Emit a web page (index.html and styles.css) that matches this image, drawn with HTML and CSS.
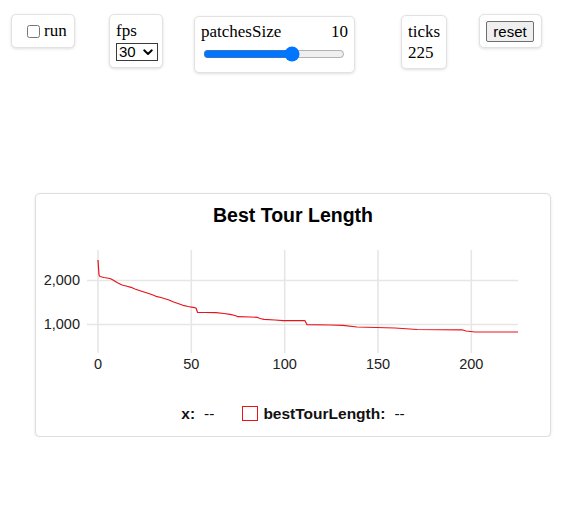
FILE: index.html
```html
<!DOCTYPE html>
<html>
<head>
<meta charset="utf-8">
<link rel="stylesheet" href="styles.css">
</head>
<body>
<div class="controls">
  <label class="box box-run"><input type="checkbox" class="check">run</label>
  <div class="box box-fps">
    <div class="line">fps</div>
    <span class="select-wrap">
      <select class="select"><option>30</option></select>
      <svg class="chev" width="10" height="7" viewBox="0 0 10 7"><path d="M1.2 1.3 L5 5 L8.8 1.3" fill="none" stroke="#000" stroke-width="1.9" stroke-linecap="round" stroke-linejoin="round"/></svg>
    </span>
  </div>
  <div class="box box-patches">
    <div class="row"><span>patchesSize</span><span>10</span></div>
    <input type="range" class="range" min="1" max="15" value="10">
  </div>
  <div class="box box-ticks">
    <div class="line">ticks</div>
    <div class="line">225</div>
  </div>
  <div class="box box-reset"><button class="btn">reset</button></div>
</div>

<div class="card">
  <div class="title">Best Tour Length</div>
  <svg class="plot" width="514" height="145" viewBox="0 0 514 145">
    <g class="grid">
      <line x1="51" y1="45.5" x2="482" y2="45.5"/>
      <line x1="51" y1="89.5" x2="482" y2="89.5"/>
      <line x1="62" y1="15" x2="62" y2="118"/>
      <line x1="155.3" y1="15" x2="155.3" y2="118"/>
      <line x1="248.7" y1="15" x2="248.7" y2="118"/>
      <line x1="342" y1="15" x2="342" y2="118"/>
      <line x1="435.3" y1="15" x2="435.3" y2="118"/>
    </g>
    <g class="ylab">
      <text x="44" y="46">2,000</text>
      <text x="44" y="90">1,000</text>
    </g>
    <g class="xlab">
      <text x="62" y="130">0</text>
      <text x="155.3" y="130">50</text>
      <text x="248.7" y="130">100</text>
      <text x="342" y="130">150</text>
      <text x="435.3" y="130">200</text>
    </g>
    <polyline class="series" points="62,25 63,40 64,41.5 68,42.5 74,43.5 77,45 81,47.5 86,50 90,51 95,52.3 99,54 104,55.7 108,57 112,58.3 117,60 121,61.7 125,62.5 129,63.7 133,65 137,66.7 142,68.5 147,70.3 152,71.5 157,72.3 160,73 161.5,77.3 169,77.5 180,77.7 188,78.5 194,79.3 199,80.5 202,81.7 214,82 221,82.3 224,83.5 228,84.3 239,85 247,85.7 269,85.7 271,89.7 294,90 307,90.3 321,92 359,93 381,94.5 426,94.8 430,96 439,97 482,97"/>
  </svg>
  <div class="legend">
    <span class="lab">x:</span><span class="val val-x">--</span>
    <span class="swatch"></span><span class="lab">bestTourLength:</span><span class="val">--</span>
  </div>
</div>
</body>
</html>
```

FILE: styles.css
```css
html, body {
  margin: 0;
  padding: 0;
  background: #fff;
}
body {
  font-family: "Liberation Serif", "Times New Roman", serif;
  font-size: 17px;
  color: #000;
}
.controls {
  display: flex;
  align-items: flex-start;
  padding: 14px 0 0 11px;
}
.box {
  box-sizing: border-box;
  background: #fff;
  border: 1px solid #e2e2e2;
  border-radius: 5px;
  box-shadow: 0 1px 3px rgba(0, 0, 0, 0.13);
}
.line {
  line-height: 21px;
}
.box-run {
  display: flex;
  align-items: center;
  width: 64px;
  height: 34px;
  padding-left: 11px;
  line-height: 20px;
}
.check {
  width: 13px;
  height: 13px;
  margin: 1px 4px 0 4px;
}
.box-fps {
  margin-left: 34px;
  width: 54px;
  height: 54px;
  padding: 5px 0 0 6px;
}
.select-wrap {
  position: relative;
  display: block;
  width: 42px;
  height: 18px;
  margin-top: 2px;
}
.select {
  appearance: none;
  -webkit-appearance: none;
  box-sizing: border-box;
  display: block;
  width: 42px;
  height: 18px;
  margin: 0;
  padding: 0 0 0 2px;
  border: 1px solid #3a3a3a;
  border-radius: 0;
  background: #fff;
  font-family: "Liberation Sans", Arial, sans-serif;
  font-size: 15px;
  line-height: 16px;
  color: #000;
}
.chev {
  position: absolute;
  right: 5px;
  top: 6px;
  pointer-events: none;
}
.box-patches {
  margin-left: 31px;
  margin-top: 2px;
  width: 161px;
  height: 57px;
  padding: 5px 6px 0 6px;
}
.row {
  display: flex;
  justify-content: space-between;
  line-height: 20px;
}
.range {
  display: block;
  width: 142px;
  margin: 4px 0 0 2px;
}
.box-ticks {
  margin-left: 46px;
  margin-top: 1px;
  width: 46px;
  height: 54px;
  padding: 5px 0 0 6px;
}
.box-reset {
  margin-left: 32px;
  width: 63px;
  height: 34px;
  padding: 6px 0 0 6px;
}
.btn {
  display: block;
  box-sizing: border-box;
  height: 21px;
  width: 48px;
  margin: 0;
  padding: 0;
  font-family: "Liberation Sans", Arial, sans-serif;
  font-size: 15px;
  line-height: 17px;
  color: #000;
  background: #efefef;
  border: 1px solid #6f6f6f;
  border-radius: 2px;
}

.card {
  box-sizing: border-box;
  width: 516px;
  height: 244px;
  margin: 120px 0 0 35px;
  background: #fff;
  border: 1px solid #dedede;
  border-radius: 5px;
  box-shadow: 0 1px 3px rgba(0, 0, 0, 0.1);
  padding-top: 9px;
  font-family: "Liberation Sans", Arial, sans-serif;
  color: #111;
}
.title {
  text-align: center;
  font-weight: bold;
  font-size: 19.5px;
  line-height: 24px;
  color: #000;
}
.plot {
  display: block;
  margin-top: 8px;
}
.grid line {
  stroke: #e6e6e6;
  stroke-width: 1.6;
}
.ylab text {
  font-family: "Liberation Sans", Arial, sans-serif;
  font-size: 14.5px;
  fill: #222;
  text-anchor: end;
  dominant-baseline: middle;
}
.xlab text {
  font-family: "Liberation Sans", Arial, sans-serif;
  font-size: 14.5px;
  fill: #222;
  text-anchor: middle;
  dominant-baseline: middle;
}
.series {
  fill: none;
  stroke: #e8141c;
  stroke-width: 1.2;
  stroke-linejoin: round;
}
.legend {
  display: flex;
  justify-content: center;
  align-items: center;
  margin-top: 23px;
  height: 21px;
  font-size: 15.5px;
  color: #111;
}
.lab {
  font-weight: bold;
}
.val {
  margin-left: 9px;
}
.val-x {
  margin-right: 28px;
}
.swatch {
  box-sizing: border-box;
  width: 16px;
  height: 15px;
  border: 1px solid #e8141c;
  margin-right: 5px;
}
```
